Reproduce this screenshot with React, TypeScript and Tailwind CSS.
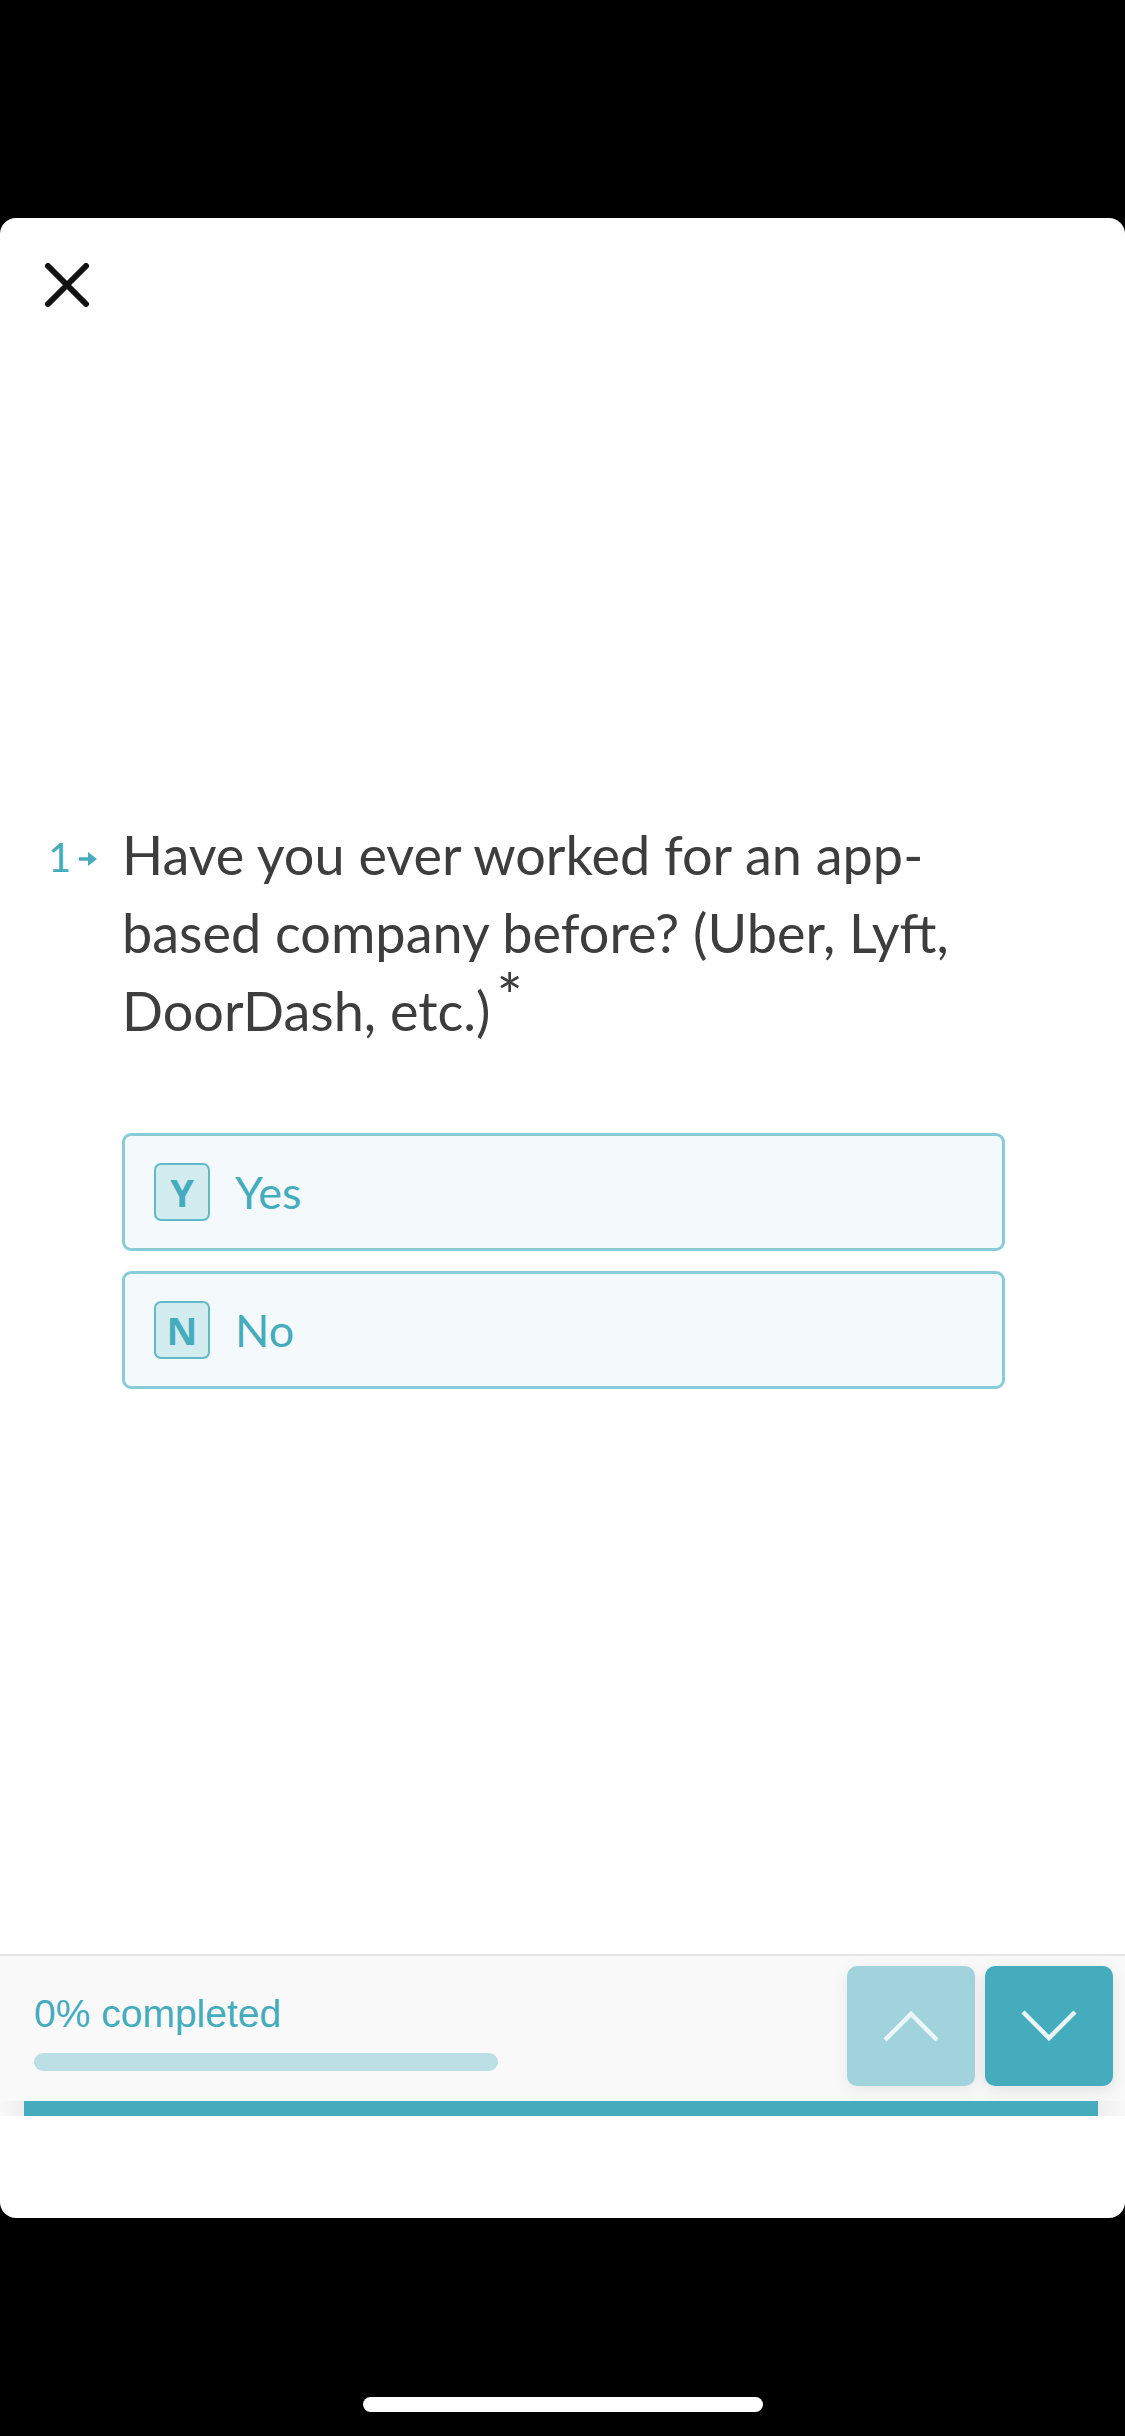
import React from "react"

const teal = "#45acbd"

function CloseIcon() {
  return (
    <svg width="44" height="44" viewBox="0 0 44 44" fill="none">
      <path d="M3 3 L41 41 M41 3 L3 41" stroke="#111" strokeWidth="6" strokeLinecap="round" />
    </svg>
  )
}

function ArrowIcon() {
  return (
    <svg width="18" height="14" viewBox="0 0 18 14" fill="none">
      <path d="M0 7 H11" stroke={teal} strokeWidth="3.5" />
      <path d="M9 0 L18 7 L9 14 Z" fill={teal} />
    </svg>
  )
}

function Chevron({ up }: { up?: boolean }) {
  return (
    <svg width="56" height="34" viewBox="0 0 56 34" fill="none">
      <path
        d={up ? "M2 31 L28 5 L54 31" : "M2 3 L28 29 L54 3"}
        stroke="#eaf6f8"
        strokeWidth="4.5"
      />
    </svg>
  )
}

function Option({ k, label }: { k: string; label: string }) {
  return (
    <button className="flex h-[118px] w-full items-center rounded-[9px] border-[3px] border-[#88ccd7] bg-[#f4fafc] pl-[29px] text-left">
      <span className="flex h-[58px] w-[56px] items-center justify-center rounded-[7px] border-[2.5px] border-[#62b9c7] bg-[#d3ecf0] font-['Open_Sans',sans-serif] text-[38px] font-bold leading-none text-[#45acbd]">
        {k}
      </span>
      <span className="ml-[25px] font-['Lato',sans-serif] text-[45px] leading-none text-[#45acbd]">
        {label}
      </span>
    </button>
  )
}

export default function App() {
  return (
    <div className="flex h-[2436px] w-[1125px] flex-col bg-black">
      <div className="h-[218px] shrink-0" />

      {/* Card */}
      <div className="flex h-[2000px] shrink-0 flex-col overflow-hidden rounded-[16px] bg-white">
        <div className="pl-[45px] pt-[45px]">
          <CloseIcon />
        </div>

        {/* Question */}
        <div className="mt-[509px] flex pl-[48px] pr-[40px]">
          <div className="flex h-[78px] w-[74px] shrink-0 items-baseline pt-[2px]">
            <span className="font-['Lato',sans-serif] text-[40px] leading-[78px] text-[#45acbd]">1</span>
            <span className="ml-[8px] self-center pt-[6px]">
              <ArrowIcon />
            </span>
          </div>
          <div className="flex-1">
            <p className="h-[234px] font-['Lato',sans-serif] text-[54px] leading-[78px] text-[#3d3d3d]">
              Have you ever worked for an app-
              <br />
              based company before? (Uber, Lyft,
              <br />
              DoorDash, etc.)
              <span className="relative -top-[12px] ml-[6px] text-[62px] leading-[0]">*</span>
            </p>

            <div className="mt-[83px] flex w-[883px] flex-col gap-[20px]">
              <Option k="Y" label="Yes" />
              <Option k="N" label="No" />
            </div>
          </div>
        </div>

        <div className="flex-1" />

        {/* Footer */}
        <div className="h-[264px] shrink-0">
          <div className="h-[2px] bg-[#e6e6e6]" />
          <div className="flex h-[145px] justify-between bg-[#f9f9f9]">
            <div className="pl-[34px] pt-[35px]">
              <p className="font-['Liberation_Sans',Arial,sans-serif] text-[39px] leading-[45px] text-[#45acbd]">
                0% completed
              </p>
              <div className="mt-[17px] h-[18px] w-[464px] rounded-full bg-[#bbdfe5]" />
            </div>
            <div className="flex gap-[10px] pr-[12px] pt-[10px]">
              <button className="flex h-[120px] w-[128px] items-center justify-center rounded-[10px] bg-[#a0d3dc] shadow-[0_4px_16px_rgba(0,0,0,0.08)]">
                <Chevron up />
              </button>
              <button className="flex h-[120px] w-[128px] items-center justify-center rounded-[10px] bg-[#44acbd] shadow-[0_4px_16px_rgba(0,0,0,0.1)]">
                <Chevron />
              </button>
            </div>
          </div>
          <div className="flex h-[15px]">
            <div className="w-[24px] bg-gradient-to-r from-[#f9f9f9] to-[#eeeeee]" />
            <div className="flex-1 bg-[#45acbd]" />
            <div className="w-[27px] bg-gradient-to-r from-[#eeeeee] to-[#f9f9f9]" />
          </div>
        </div>
      </div>

      {/* Home indicator */}
      <div className="flex flex-1 items-start justify-center pt-[179px]">
        <div className="h-[15px] w-[400px] rounded-full bg-white" />
      </div>
    </div>
  )
}
